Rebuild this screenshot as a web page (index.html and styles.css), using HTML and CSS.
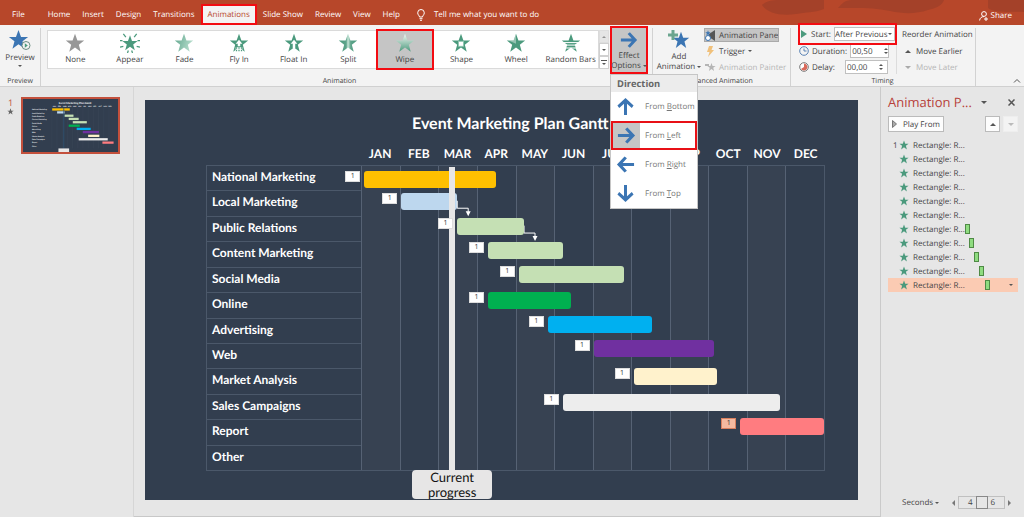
FILE: index.html
```
<!DOCTYPE html>
<html lang="en">
<head>
    <meta charset="UTF-8">
    <meta name="viewport" content="width=device-width, initial-scale=1.0">
    <title>Event Marketing Plan Gantt Chart</title>
    <link rel="stylesheet" href="styles.css">
</head>
<body>

    <!-- Shared icon shapes -->
    <svg class="defs" width="0" height="0" aria-hidden="true">
        <defs>
            <linearGradient id="fadeGrad" x1="0" y1="0" x2="1" y2="0.3">
                <stop offset="0" stop-color="#5ea48b"/>
                <stop offset="1" stop-color="#b4dccb"/>
            </linearGradient>
            <linearGradient id="wipeGrad" x1="0" y1="0" x2="0" y2="1">
                <stop offset="0" stop-color="#f4faf7"/>
                <stop offset="0.25" stop-color="#c8e0d5"/>
                <stop offset="1" stop-color="#4b9a7d"/>
            </linearGradient>
            <linearGradient id="splitGrad" x1="0" y1="0" x2="1" y2="0">
                <stop offset="0" stop-color="#4b9a7d"/>
                <stop offset="0.4" stop-color="#5ea48b"/>
                <stop offset="0.5" stop-color="#c8e6d9"/>
                <stop offset="0.65" stop-color="#5ea48b"/>
                <stop offset="1" stop-color="#4b9a7d"/>
            </linearGradient>
            <symbol id="star" viewBox="0 0 24 24">
                <path d="M12 1l2.9 8H23l-6.4 5 2.3 8.5-6.9-5.1-6.9 5.1L7.4 14 1 9h8.1z"/>
            </symbol>
            <symbol id="arrow" viewBox="0 0 20 20">
                <path d="M1 8.400h12L8.500 3.400 11 1.500l8 8.500-8 8.500-2.500-1.900 4.500-5H1z"/>
            </symbol>
        </defs>
    </svg>

    <header class="titlebar">
        <svg class="titlebar-art" viewBox="0 0 280 25" aria-hidden="true">
            <path d="M18 5c4-4 10-5 18-5h44v9c-10 4-18 3-28 5-14 2-28 0-34-9z"/>
            <path d="M94 8c4-4 6-8 14-8h92c-2 6-8 8-16 10-12 4-24 4-38 1-18-4-34-3-52-3z"/>
            <path d="M244 0h36v12c-12-1-28 2-36-4z"/>
        </svg>
        <nav class="tabs">
            <a class="tab tab-file" href="#">File</a>
            <a class="tab" href="#">Home</a>
            <a class="tab" href="#">Insert</a>
            <a class="tab" href="#">Design</a>
            <a class="tab" href="#">Transitions</a>
            <a class="tab tab-active" href="#">Animations</a>
            <a class="tab" href="#">Slide Show</a>
            <a class="tab" href="#">Review</a>
            <a class="tab" href="#">View</a>
            <a class="tab" href="#">Help</a>
        </nav>
        <a class="tell-me" href="#">
            <svg width="8" height="12" viewBox="0 0 8 12" fill="none" stroke="#fff"><path d="M2.5 8C2.500 6.500.7 6 .7 3.800a3.300 3.300 0 0 1 6.600 0C7.300 6 5.500 6.500 5.500 8zM2.500 9.700h3M3 11.300h2"/></svg>
            Tell me what you want to do
        </a>
        <a class="share" href="#">
            <svg width="10" height="10" viewBox="0 0 10 10" fill="none" stroke="#fff"><circle cx="5" cy="3" r="2.400"/><path d="M.6 9.500C.8 7 2.500 5.600 5 5.600M5 8h4M7 6v4"/></svg>
            Share
        </a>
    </header>

    <div class="ribbon">
        <section class="group group-preview">
            <div class="group-body">
                <button class="big-button">
                    <svg width="24" height="22" viewBox="0 0 24 22">
                        <use href="#star" x="0" y="0" width="21" height="21" fill="#3b75b3"/>
                        <circle cx="18" cy="16.500" r="4" fill="#f3f3f3" stroke="#6d8f83"/>
                        <path d="M16.800 14.300v4.400l3-2.200z" fill="#4b9a7d"/>
                    </svg>
                    <span>Preview</span>
                    <span class="caret"></span>
                </button>
            </div>
            <h2 class="group-label">Preview</h2>
        </section>

        <section class="group group-animation">
            <div class="group-body">
                <div class="gallery">
                    <button class="effect">
                        <svg viewBox="0 0 24 24" fill="#979797"><use href="#star"/></svg>
                        None
                    </button>
                    <button class="effect">
                        <svg viewBox="0 0 24 24" fill="#4b9a7d"><use href="#star" x="2" y="2" width="20" height="20"/><path d="M4 1l3 4M20 1l-3 4M0 9h3M21 9h3M0 17l4-1M24 17l-4-1M9 24l1-3M15 24l-1-3" stroke="#4b9a7d" stroke-width="1.500"/></svg>
                        Appear
                    </button>
                    <button class="effect">
                        <svg viewBox="0 0 24 24" fill="url(#fadeGrad)"><use href="#star"/></svg>
                        Fade
                    </button>
                    <button class="effect">
                        <svg viewBox="0 0 24 24" fill="#4b9a7d"><use href="#star"/><path d="M12 8l4 5h-2.500v3h-3v-3H8z" fill="#fff"/><path d="M8 17h8v7H8z" fill="#fff"/><path d="M9 17v5M12 17v6M15 17v5" stroke="#4b9a7d" stroke-width="1.500" stroke-dasharray="2 1"/></svg>
                        Fly In
                    </button>
                    <button class="effect">
                        <svg viewBox="0 0 24 24" fill="#4b9a7d"><use href="#star"/><path d="M12 8l4 5h-2.500v5h-3v-5H8z" fill="#fff"/></svg>
                        Float In
                    </button>
                    <button class="effect">
                        <svg viewBox="0 0 24 24" fill="url(#splitGrad)"><use href="#star"/></svg>
                        Split
                    </button>
                    <button class="effect effect-selected">
                        <svg viewBox="0 0 24 24" fill="url(#wipeGrad)"><use href="#star"/></svg>
                        Wipe
                    </button>
                    <button class="effect">
                        <svg viewBox="0 0 24 24" fill="#4b9a7d"><use href="#star"/><path d="M9 10h6v6H9z" fill="#fff" stroke="#8cc4ae"/></svg>
                        Shape
                    </button>
                    <button class="effect">
                        <svg viewBox="0 0 24 24" fill="#4b9a7d"><use href="#star"/><path d="M12 13V1L9 9l-6 0z" fill="#fff" opacity="0.400"/></svg>
                        Wheel
                    </button>
                    <button class="effect">
                        <svg viewBox="0 0 24 24" fill="#4b9a7d"><use href="#star"/><path d="M0 11.500h24M0 14.500h24M0 18h24" stroke="#fff" stroke-width="1.200"/></svg>
                        Random Bars
                    </button>
                </div>
                <div class="gallery-scroll">
                    <button class="scroll-off" aria-label="Scroll up"><span class="caret caret-up"></span></button>
                    <button aria-label="Scroll down"><span class="caret"></span></button>
                    <button aria-label="More effects"><span class="caret caret-more"></span></button>
                </div>
                <div class="effect-options">
                    <button class="big-button options-button">
                        <svg width="18" height="18" fill="#3b75b3"><use href="#arrow"/></svg>
                        <span>Effect</span>
                        <span>Options <i class="caret"></i></span>
                    </button>
                    <div class="direction-menu">
                        <h3>Direction</h3>
                        <button><svg class="turn-up"><use href="#arrow"/></svg><span>From <u>B</u>ottom</span></button>
                        <button class="direction-selected"><svg><use href="#arrow"/></svg><span>From <u>L</u>eft</span></button>
                        <button><svg class="turn-left"><use href="#arrow"/></svg><span>From <u>R</u>ight</span></button>
                        <button><svg class="turn-down"><use href="#arrow"/></svg><span>From <u>T</u>op</span></button>
                    </div>
                </div>
            </div>
            <h2 class="group-label">Animation</h2>
        </section>

        <section class="group group-advanced">
            <div class="group-body">
                <button class="big-button add-button">
                    <svg width="22" height="20" viewBox="0 0 22 20">
                        <use href="#star" x="4" y="1" width="18" height="18" fill="#3b75b3"/>
                        <path d="M3.500 0h3v3.500H10v3H6.500V10h-3V6.500H0v-3h3.500z" fill="#6ba58f"/>
                    </svg>
                    <span>Add</span>
                    <span>Animation <i class="caret"></i></span>
                </button>
                <div class="stack">
                    <button class="row-button row-pressed">
                        <svg width="11" height="11" viewBox="0 0 11 11"><path d="M4 4l6-4v11L4 7z" fill="#555"/><use href="#star" width="6" height="6" fill="#3b75b3"/><circle cx="3" cy="8" r="2.500" fill="#fff" stroke="#3b75b3"/></svg>
                        Animation Pane
                    </button>
                    <button class="row-button">
                        <svg width="11" height="11" viewBox="0 0 11 11"><path d="M4 0h4L6.500 4H9l-6 7 1.500-5H2z" fill="#f0c07a"/></svg>
                        Trigger <i class="caret"></i>
                    </button>
                    <button class="row-button row-off" disabled>
                        <svg width="11" height="11" viewBox="0 0 11 11"><use href="#star" x="2" width="9" height="10" fill="#b5b5b5"/><path d="M0 2h4v2H0z" fill="#b5b5b5"/></svg>
                        Animation Painter
                    </button>
                </div>
            </div>
            <h2 class="group-label">Advanced Animation</h2>
        </section>

        <section class="group group-timing">
            <div class="group-body">
                <div class="timing-fields">
                    <div class="field field-start">
                        <svg width="8" height="10" viewBox="0 0 8 10"><path d="M1 1v8l6-4z" fill="#4b9a7d"/></svg>
                        <label for="start">Start:</label>
                        <select id="start"><option>After Previous</option></select>
                    </div>
                    <div class="field">
                        <svg width="10" height="10" viewBox="0 0 10 10" fill="none" stroke="#5a82b4"><circle cx="5" cy="5" r="4.300"/><path d="M5 2.500V5h2.500"/></svg>
                        <label for="duration">Duration:</label>
                        <div class="spinner"><input id="duration" type="text" value="00,50"><span class="spin"><i class="caret caret-up"></i><i class="caret"></i></span></div>
                    </div>
                    <div class="field">
                        <svg width="10" height="10" viewBox="0 0 10 10" fill="#fff" stroke="#777"><circle cx="5" cy="5" r="4.300"/><path d="M5 5V1.500A3.500 3.500 0 1 1 2 7z" fill="#d9695a" stroke="none"/></svg>
                        <label for="delay">Delay:</label>
                        <div class="spinner"><input id="delay" type="text" value="00,00"><span class="spin"><i class="caret caret-up"></i><i class="caret"></i></span></div>
                    </div>
                </div>
                <div class="stack reorder">
                    <span class="reorder-title">Reorder Animation</span>
                    <button class="row-button"><i class="caret caret-up caret-large"></i>Move Earlier</button>
                    <button class="row-button row-off" disabled><i class="caret caret-large"></i>Move Later</button>
                </div>
            </div>
            <h2 class="group-label">Timing</h2>
        </section>

        <button class="collapse" aria-label="Collapse the ribbon">
            <svg width="8" height="5" viewBox="0 0 8 5" fill="none" stroke="#555"><path d="M1 4.500l3-3 3 3"/></svg>
        </button>
    </div>

    <main class="workspace">
        <aside class="slides">
            <div class="slide-number">
                <span>1</span>
                <svg width="7" height="7" fill="#666"><use href="#star"/></svg>
            </div>
            <a class="thumb" href="#" aria-label="Slide 1">
                <svg id="thumb" viewBox="0 0 713 400"></svg>
            </a>
        </aside>

        <div class="editor">
            <article class="slide">
                <h1>Event Marketing Plan Gantt Chart</h1>
                <div class="months" id="months"></div>
                <div class="chart">
                    <ul class="tasks" id="tasks"></ul>
                    <div class="timeline" id="timeline">
                        <div class="columns" id="columns"></div>
                    </div>
                </div>
            </article>
        </div>

        <aside class="pane">
            <div class="pane-head">
                <h2>Animation P...</h2>
                <button aria-label="Pane options"><i class="caret caret-large"></i></button>
                <button aria-label="Close">
                    <svg width="7" height="7" viewBox="0 0 7 7" stroke="#555" stroke-width="1.500"><path d="M.5.5l6 6M6.500.5l-6 6"/></svg>
                </button>
            </div>
            <div class="pane-tools">
                <button class="play">
                    <svg width="5" height="8" viewBox="0 0 5 8"><path d="M.5.5v7L4.500 4z" fill="#aaa" stroke="#777"/></svg>
                    Play From
                </button>
                <button class="move" aria-label="Move up"><i class="caret caret-up caret-large"></i></button>
                <button class="move move-off" aria-label="Move down"><i class="caret caret-large"></i></button>
            </div>
            <ol class="effects" id="effects"></ol>
            <div class="pane-foot">
                <button class="seconds">Seconds <i class="caret"></i></button>
                <i class="caret caret-left"></i>
                <div class="zoombar"><span>4</span><b></b><span>6</span></div>
                <i class="caret caret-right"></i>
            </div>
        </aside>
    </main>

    <script>
        const months = ['JAN', 'FEB', 'MAR', 'APR', 'MAY', 'JUN', 'JUL', 'AUG', 'SEP', 'OCT', 'NOV', 'DEC'];

        // Timeline drawing units: 464 wide, 306 high
        const tasks = [
            { name: 'National Marketing', x: 3, y: 5, w: 132, color: '#ffc000' },
            { name: 'Local Marketing', x: 40, y: 27, w: 56, color: '#bdd7ee' },
            { name: 'Public Relations', x: 96, y: 52, w: 67, color: '#c5e0b4', front: true },
            { name: 'Content Marketing', x: 127, y: 76, w: 75, color: '#c5e0b4' },
            { name: 'Social Media', x: 158, y: 101, w: 105, color: '#c5e0b4' },
            { name: 'Online', x: 127, y: 127, w: 83, color: '#00b050' },
            { name: 'Advertising', x: 187, y: 151, w: 105, color: '#00b0f0' },
            { name: 'Web', x: 233, y: 175, w: 121, color: '#7030a0' },
            { name: 'Market Analysis', x: 273, y: 203, w: 84, color: '#fff2cc' },
            { name: 'Sales Campaigns', x: 202, y: 229, w: 218, color: '#ededed' },
            { name: 'Report', x: 380, y: 254, w: 84, color: '#ff7c80', selected: true },
            { name: 'Other' }
        ];

        const timeline = document.getElementById('timeline');
        const thumb = document.getElementById('thumb');
        let thumbShapes = '<text x="268" y="34" font-size="20">Event Marketing Plan Gantt</text>';

        months.forEach((month, i) => {
            document.getElementById('months').innerHTML += `<span>${month}</span>`;
            document.getElementById('columns').innerHTML += '<i></i>';
            thumbShapes += `<text x="${224 + i * 38}" y="60" font-size="12">${month}</text>`;
            thumbShapes += `<path d="M${216 + i * 39} 65v306" stroke="#3d4a5c" stroke-width="3"/>`;
        });

        tasks.forEach((task, i) => {
            document.getElementById('tasks').innerHTML += `<li>${task.name}</li>`;
            thumbShapes += `<text x="67" y="${84 + i * 25}" font-size="13">${task.name}</text>`;
            if (task.w) {
                const bar = document.createElement('div');
                bar.className = 'bar' + (task.front ? ' bar-front' : '') + (task.selected ? ' bar-selected' : '');
                bar.style.left = task.x / 464 * 100 + '%';
                bar.style.top = task.y / 306 * 100 + '%';
                bar.style.width = task.w / 464 * 100 + '%';
                bar.style.backgroundColor = task.color;
                bar.innerHTML = '<span class="tag">1</span>';
                timeline.appendChild(bar);
                thumbShapes += `<rect x="${216 + task.x}" y="${65 + task.y}" width="${task.w}" height="17" fill="${task.color}"/>`;
            }
        });

        // Dependency arrows and the current progress marker
        timeline.insertAdjacentHTML('beforeend', `
            <svg class="links" viewBox="0 0 464 306" preserveAspectRatio="none">
                <path d="M96.500 35v7.500h11V47M163.500 60v7.500h11V72" fill="none" stroke="#fff"/>
                <path d="M105 45.500h5l-2.500 5zM172 70.500h5l-2.500 5z" fill="#fff"/>
            </svg>
            <div class="progress-line"></div>
            <div class="progress-label">Current progress</div>`);
        thumb.innerHTML = thumbShapes + '<path d="M306 67v304" stroke="#2f5573" stroke-width="6"/><rect x="266" y="371" width="80" height="29" fill="#e7e6e6"/>';

        // Green blocks show where each effect starts
        const starts = { 6: 0, 7: 4, 8: 9, 9: 14, 10: 20 };
        for (let i = 0; i < 11; i++) {
            document.getElementById('effects').innerHTML += `
                <li class="${i === 10 ? 'effect-current' : ''}">
                    <span class="order">${i === 0 ? '1' : ''}</span>
                    <svg width="10" height="10"><use href="#star"/></svg>
                    <span class="effect-name">Rectangle: R...</span>
                    ${i in starts ? `<span class="block" style="margin-left: ${starts[i]}px"></span>` : ''}
                    ${i === 10 ? '<i class="caret"></i>' : ''}
                </li>`;
        }
    </script>

</body>
</html>
```
FILE: styles.css
```
* {
    box-sizing: border-box;
}
body {
    margin: 0;
    min-height: 100vh;
    display: flex;
    flex-direction: column;
    font-family: "Open Sans", "Noto Sans", sans-serif;
    font-size: 8px;
    text-rendering: geometricPrecision;
    color: #444;
    background-color: #e6e6e6;
}
h1, h2, h3, ul, ol {
    margin: 0;
    padding: 0;
    font-weight: normal;
    list-style: none;
}
button, input, select {
    margin: 0;
    padding: 0;
    border: none;
    background: none;
    font: inherit;
    text-rendering: inherit;
    color: inherit;
}
a {
    color: inherit;
    text-decoration: none;
}
svg {
    flex: none;
}
.defs {
    position: absolute;
}

/* Small triangles */
.caret {
    display: inline-block;
    flex: none;
    border: 2px solid transparent;
    border-top-color: #555;
    border-bottom: none;
    vertical-align: middle;
}
.caret-up {
    border-top: none;
    border-bottom: 2px solid #555;
}
.caret-large {
    border-width: 3px;
    border-bottom: none;
}
.caret-up.caret-large {
    border-top: none;
    border-bottom: 3px solid #555;
}
.caret-left {
    border: 3px solid transparent;
    border-right-color: #777;
    border-left: none;
}
.caret-right {
    border: 3px solid transparent;
    border-left-color: #777;
    border-right: none;
}
.caret-more {
    position: relative;
    margin-top: 2px;
}
.caret-more::before {
    content: "";
    position: absolute;
    left: -3px;
    top: -5px;
    width: 6px;
    height: 1px;
    background-color: #555;
}

/* Title bar */
.titlebar {
    position: relative;
    height: 25px;
    display: flex;
    align-items: flex-end;
    background-color: #b7472a;
    color: #fff;
}
.titlebar-art {
    position: absolute;
    right: 0;
    top: 0;
    width: 280px;
    height: 25px;
    fill: #a44129;
}
.tabs {
    display: flex;
}
.tab {
    height: 21px;
    padding: 0 6px;
    line-height: 22px;
}
.tab-file {
    padding: 0 17px 0 12px;
}
.tab-active {
    padding: 0 5px;
    border: 2px solid #f30c12;
    line-height: 18px;
    background-color: #f3f3f3;
    color: #b7472a;
}
.tell-me {
    display: flex;
    align-items: center;
    gap: 9px;
    height: 21px;
    margin-left: 11px;
}
.share {
    position: relative;
    display: flex;
    align-items: center;
    gap: 2px;
    height: 19px;
    margin-left: auto;
    margin-right: 12px;
}

/* Ribbon */
.ribbon {
    position: relative;
    display: flex;
    height: 62px;
    padding: 3px 0 0;
    border-bottom: 1px solid #d0d0d0;
    background-color: #f3f3f3;
}
.group {
    display: flex;
    flex-direction: column;
    justify-content: space-between;
    border-right: 1px solid #d2d2d2;
}
.group-preview {
    width: 41px;
}
.group-animation {
    flex: 1;
    padding-left: 6px;
}
.group-advanced {
    width: 138px;
    padding-left: 3px;
}
.group-timing {
    width: 185px;
    padding-left: 7px;
}
.group-body {
    display: flex;
}
.group-label {
    padding-right: 8px;
    font-size: 7px;
    line-height: 9px;
    text-align: center;
}
.group-preview .group-label {
    padding-right: 0;
}
.group-animation .group-label {
    padding-right: 20px;
}
.big-button {
    display: flex;
    flex-direction: column;
    align-items: center;
    line-height: 10px;
    white-space: nowrap;
}
.group-preview .big-button {
    width: 40px;
    padding-top: 1px;
    gap: 2px;
}
.gallery {
    flex: 1;
    display: flex;
    height: 39px;
    margin-top: 2px;
    border: 1px solid #dadada;
    background-color: #fff;
}
.effect {
    flex: 1 1 0;
    display: flex;
    flex-direction: column;
    align-items: center;
    line-height: 14px;
    white-space: nowrap;
}
.effect svg {
    width: 20px;
    height: 20px;
    margin-top: 2px;
}
.effect-selected {
    margin: -2px 0;
    border: 2px solid #f30c12;
    background-color: #c5c5c5;
}
.gallery-scroll {
    width: 10px;
    height: 39px;
    margin-top: 2px;
    display: flex;
    flex-direction: column;
}
.gallery-scroll button {
    flex: 1;
    display: flex;
    align-items: center;
    justify-content: center;
    border: 1px solid #d0d0d0;
    background-color: #fff;
}
.gallery-scroll .scroll-off {
    background-color: #ddd;
    opacity: 0.6;
}
.effect-options {
    position: relative;
    margin: -2px 4px 0 1px;
}
.options-button {
    width: 38px;
    height: 48px;
    padding-top: 3px;
    border: 2px solid #f30c12;
    background-color: #c5c5c5;
}
.options-button svg {
    margin-bottom: 2px;
}
.direction-menu {
    position: absolute;
    z-index: 10;
    left: 0;
    top: 48px;
    width: 88px;
    border: 1px solid #c6c6c6;
    background-color: #fff;
}
.direction-menu h3 {
    padding-left: 6px;
    line-height: 17px;
    font-weight: bold;
    background-color: #ececec;
    color: #666;
}
.direction-menu button {
    display: flex;
    align-items: center;
    gap: 5px;
    width: 100%;
    height: 29px;
    color: #777;
}
.direction-menu svg {
    width: 29px;
    height: 29px;
    padding: 5px;
    fill: #3b75b3;
}
.direction-menu .direction-selected {
    border: 2px solid #e81016;
}
.direction-menu .direction-selected svg {
    width: 27px;
    height: 25px;
    padding: 3px;
    background-color: #c5c5c5;
}
.turn-up {
    transform: rotate(-90deg);
}
.turn-left {
    transform: rotate(180deg);
}
.turn-down {
    transform: rotate(90deg);
}
.add-button {
    width: 46px;
    padding-top: 2px;
}
.add-button svg {
    margin-bottom: 2px;
}
.stack {
    display: flex;
    flex-direction: column;
    gap: 2px;
    align-items: flex-start;
    margin-left: 2px;
}
.row-button {
    display: flex;
    align-items: center;
    gap: 3px;
    height: 14px;
    padding: 0 1px;
    white-space: nowrap;
}
.row-pressed {
    outline: 1px solid #aaa;
    outline-offset: -1px;
    background-color: #c5c5c5;
}
.row-off {
    color: #b5b5b5;
}
.row-off .caret {
    border-top-color: #aaa;
}
.timing-fields {
    display: flex;
    flex-direction: column;
    gap: 2px;
    width: 99px;
    padding-left: 1px;
    border-right: 1px solid #dcdcdc;
}
.field {
    display: flex;
    align-items: center;
    gap: 3px;
    height: 14px;
    padding-right: 8px;
}
.field label {
    flex: 1;
}
.field-start {
    position: relative;
    height: 22px;
    margin: -5px -1px -3px;
    padding: 0;
    border: 2px solid #f30c12;
}
.field-start::after {
    content: "";
    position: absolute;
    right: 3px;
    top: 8px;
    border: 2px solid transparent;
    border-top-color: #555;
    border-bottom: none;
}
.field-start select {
    width: 63px;
    height: 14px;
    appearance: none;
    border: 1px solid #c0c0c0;
    background-color: #fff;
}
.spinner {
    display: flex;
    width: 43px;
    height: 14px;
    border: 1px solid #c0c0c0;
    background-color: #fff;
}
.spinner input {
    width: 33px;
    padding-left: 1px;
}
.spin {
    display: flex;
    flex-direction: column;
    justify-content: space-evenly;
}
.reorder {
    margin-left: 5px;
}
.reorder-title {
    line-height: 14px;
    white-space: nowrap;
}
.reorder .row-button {
    padding-left: 3px;
    gap: 5px;
}
.collapse {
    width: 48px;
    display: flex;
    align-items: flex-end;
    justify-content: flex-end;
    padding: 0 3px 3px 0;
}

/* Slide list */
.workspace {
    flex: 1;
    display: flex;
}
.slides {
    display: flex;
    align-items: flex-start;
    width: 134px;
    padding-top: 10px;
    border-right: 1px solid #d6d6d6;
}
.slide-number {
    display: flex;
    flex-direction: column;
    align-items: center;
    width: 21px;
    font-size: 9px;
    line-height: 11px;
    color: #c0503a;
}
.thumb {
    width: 99px;
    border: 2px solid #c3503c;
    background-color: #323e4f;
}
.thumb svg {
    display: block;
    width: 100%;
    fill: #fff;
    font-family: Lato, sans-serif;
    font-weight: bold;
}

/* Slide */
.editor {
    flex: 1;
    padding: 13px 22px 15px 11px;
    border-bottom: 1px solid #c8c8c8;
}
.slide {
    display: flex;
    flex-direction: column;
    min-height: 400px;
    padding: 14px 33px 29px 61px;
    background-color: #323e4f;
    color: #fff;
    font-family: Lato, "Open Sans", sans-serif;
    font-weight: bold;
}
.slide h1 {
    padding-left: 206px;
    font-size: 16px;
    font-weight: bold;
    line-height: 20px;
    white-space: nowrap;
}
.months {
    display: flex;
    margin-left: 25%;
    padding-top: 9px;
    font-size: 12px;
    line-height: 22px;
    text-align: center;
}
.months span {
    flex: 1 1 0;
}
.chart {
    flex: 1;
    display: flex;
    border: 1px solid #4b586a;
}
.tasks {
    display: flex;
    flex-direction: column;
    width: 25%;
    font-size: 12px;
    font-weight: bold;
    line-height: 22px;
}
.tasks li {
    flex: 1 1 0;
    padding-left: 5px;
    border-bottom: 1px solid #4b586a;
}
.tasks li:last-child {
    border-bottom: none;
}
.timeline {
    position: relative;
    flex: 1;
}
.columns {
    display: flex;
    height: 100%;
}
.columns i {
    flex: 1 1 0;
    border-left: 1px solid #566274;
}
.columns i:nth-child(odd) {
    background-color: #374252;
}
.bar {
    position: absolute;
    height: 17px;
    border-radius: 3px;
}
.bar-front {
    z-index: 2;
}
.tag {
    position: absolute;
    right: 100%;
    top: 0;
    width: 15px;
    height: 11px;
    margin-right: 4px;
    border: 1px solid #ddd;
    font-family: "Open Sans", sans-serif;
    font-size: 7px;
    font-weight: normal;
    line-height: 9px;
    text-align: center;
    background-color: #fff;
    color: #333;
}
.bar-selected .tag {
    border-color: #d9805f;
    background-color: #f4b9a0;
}
.links {
    position: absolute;
    left: 0;
    top: 0;
    width: 100%;
    height: 100%;
}
.progress-line {
    position: absolute;
    left: 19%;
    top: 1px;
    bottom: 0;
    width: 6px;
    background-color: #e7e6e6;
}
.progress-label {
    position: absolute;
    left: 11%;
    top: 100%;
    width: 80px;
    height: 29px;
    border-radius: 4px;
    font-size: 13px;
    font-weight: normal;
    line-height: 15px;
    text-align: center;
    background-color: #e7e6e6;
    color: #111;
}

/* Animation pane */
.pane {
    display: flex;
    flex-direction: column;
    width: 144px;
    padding: 3px 6px 8px 7px;
    border-left: 1px solid #cacaca;
}
.pane-head {
    display: flex;
    align-items: center;
    height: 20px;
    margin-top: 2px;
}
.pane-head h2 {
    width: 93px;
    font-size: 13px;
    white-space: nowrap;
    color: #b7413a;
}
.pane-head button {
    display: flex;
}
.pane-head button:last-child {
    margin-left: auto;
    margin-right: 3px;
}
.pane-tools {
    display: flex;
    gap: 3px;
    margin-top: 4px;
}
.pane-tools button {
    display: flex;
    align-items: center;
    justify-content: center;
    height: 16px;
    border: 1px solid #bbb;
    background-color: #fdfdfd;
}
.pane-tools .play {
    width: 56px;
    gap: 6px;
    margin-right: auto;
}
.pane-tools .move {
    width: 15px;
}
.pane-tools .move-off {
    border-color: #eee;
    background-color: #f3f3f3;
}
.move-off .caret {
    border-top-color: #bbb;
}
.effects {
    margin-top: 6px;
}
.effects li {
    display: flex;
    align-items: center;
    height: 14px;
    padding-right: 5px;
}
.effects svg {
    fill: #4b9a7d;
}
.order {
    width: 11px;
    padding-left: 5px;
}
.effect-name {
    width: 52px;
    margin-left: 4px;
    white-space: nowrap;
}
.effects .effect-current {
    background-color: #fbcbb3;
}
.effect-current .caret {
    margin-left: auto;
}
.block {
    width: 5px;
    height: 10px;
    border: 1px solid #4f8a45;
    background-color: #8fdc80;
}
.pane-foot {
    display: flex;
    align-items: center;
    margin-top: auto;
    padding: 0 7px 0 14px;
    gap: 3px;
}
.seconds {
    margin-right: auto;
}
.zoombar {
    display: flex;
    justify-content: center;
    align-items: center;
    gap: 3px;
    width: 47px;
    height: 13px;
    border: 1px solid #c0c0c0;
}
.zoombar b {
    width: 12px;
    height: 13px;
    border: 1px solid #888;
}
```
